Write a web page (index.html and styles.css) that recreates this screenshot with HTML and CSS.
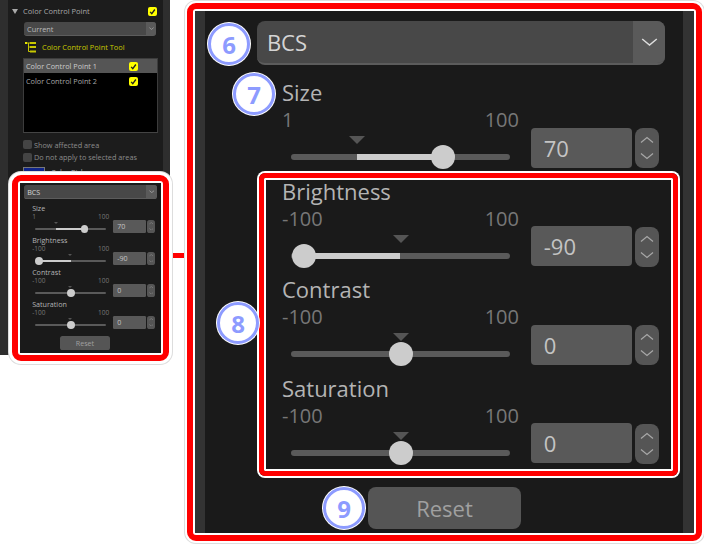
FILE: index.html
```html
<!DOCTYPE html>
<html lang="en">
<head>
  <meta charset="UTF-8" />
  <title>Color Control Point</title>
  <link rel="stylesheet" href="styles.css">
</head>
<body>
  <svg class="defs" aria-hidden="true">
    <symbol id="tick" viewBox="0 0 10 10"><path d="M2.4 5.4 L4.2 7.4 L7.6 2.8" fill="none" stroke="#222" stroke-width="1.5"/></symbol>
    <symbol id="up" viewBox="0 0 14 8"><path d="M1 6.5 L7 1.5 L13 6.5" fill="none" stroke="currentColor" stroke-width="1.2"/></symbol>
    <symbol id="down" viewBox="0 0 14 8"><path d="M1 1.5 L7 6.5 L13 1.5" fill="none" stroke="currentColor" stroke-width="1.2"/></symbol>
  </svg>

  <div class="figure">
    <!-- Kleines Panel links -->
    <div class="side-panel">
      <div class="side-content">
        <div class="side-head">
          <span class="caret"></span>
          <span class="side-title">Color Control Point</span>
          <svg class="yes-box"><use href="#tick"/></svg>
        </div>
        <div class="select small-select">
          <span class="select-text">Current</span>
          <span class="select-arrow"><svg><use href="#down"/></svg></span>
        </div>
        <div class="tool-row">
          <svg class="tool-icon" viewBox="0 0 11 11">
            <rect x="0" y="0" width="2" height="2" fill="#e6e600"/>
            <path d="M2 1 H5 M3.500 1 V9.500 H5 M3.500 5 H5" fill="none" stroke="#c8c800" stroke-width="1"/>
            <rect x="5" y="0" width="6" height="2" fill="#c8c800"/>
            <rect x="5" y="4" width="6" height="2" fill="#c8c800"/>
            <rect x="5" y="8.500" width="6" height="2" fill="#c8c800"/>
          </svg>
          <span>Color Control Point Tool</span>
        </div>
        <div class="point-list">
          <div class="point-row active"><span>Color Control Point 1</span><svg class="yes-box"><use href="#tick"/></svg></div>
          <div class="point-row"><span>Color Control Point 2</span><svg class="yes-box"><use href="#tick"/></svg></div>
        </div>
        <label class="option first"><span class="off-box"></span>Show affected area</label>
        <label class="option"><span class="off-box"></span>Do not apply to selected areas</label>
        <div class="picker"><span class="swatch"></span>Color Picker</div>
      </div>

      <div class="callout side-callout">
        <div class="callout-inner">
          <div class="bcs bcs-small">
            <div class="select">
              <span class="select-text">BCS</span>
              <span class="select-arrow"><svg><use href="#down"/></svg></span>
            </div>
            <div class="rows">
              <div class="row">
                <div class="row-left">
                  <div class="row-label">Size</div>
                  <div class="scale"><span>1</span><span>100</span></div>
                  <div class="track"><span class="fill" style="left:30%;width:39.5%"></span><span class="marker" style="left:30%"></span><span class="thumb" style="left:69.500%"></span></div>
                </div>
                <div class="value">70</div>
                <div class="spin"><svg><use href="#up"/></svg><svg><use href="#down"/></svg></div>
              </div>
              <div class="row">
                <div class="row-left">
                  <div class="row-label">Brightness</div>
                  <div class="scale"><span>-100</span><span>100</span></div>
                  <div class="track"><span class="fill" style="left:6%;width:44%"></span><span class="marker" style="left:50%"></span><span class="thumb" style="left:6%"></span></div>
                </div>
                <div class="value">-90</div>
                <div class="spin"><svg><use href="#up"/></svg><svg><use href="#down"/></svg></div>
              </div>
              <div class="row">
                <div class="row-left">
                  <div class="row-label">Contrast</div>
                  <div class="scale"><span>-100</span><span>100</span></div>
                  <div class="track"><span class="marker" style="left:50%"></span><span class="thumb" style="left:50%"></span></div>
                </div>
                <div class="value">0</div>
                <div class="spin"><svg><use href="#up"/></svg><svg><use href="#down"/></svg></div>
              </div>
              <div class="row">
                <div class="row-left">
                  <div class="row-label">Saturation</div>
                  <div class="scale"><span>-100</span><span>100</span></div>
                  <div class="track"><span class="marker" style="left:50%"></span><span class="thumb" style="left:50%"></span></div>
                </div>
                <div class="value">0</div>
                <div class="spin"><svg><use href="#up"/></svg><svg><use href="#down"/></svg></div>
              </div>
            </div>
            <div class="reset">Reset</div>
          </div>
        </div>
      </div>
    </div>

    <div class="connector"></div>

    <!-- Vergroesserter Ausschnitt -->
    <div class="callout main-callout">
      <div class="callout-inner main-inner">
        <div class="bcs bcs-large">
          <div class="select">
            <span class="select-text">BCS</span>
            <span class="select-arrow"><svg><use href="#down"/></svg></span>
          </div>
          <div class="rows">
            <div class="row">
              <div class="row-left">
                <div class="row-label">Size</div>
                <div class="scale"><span>1</span><span>100</span></div>
                <div class="track"><span class="fill" style="left:30%;width:39.5%"></span><span class="marker" style="left:30%"></span><span class="thumb" style="left:69.500%"></span></div>
              </div>
              <div class="value">70</div>
              <div class="spin"><svg><use href="#up"/></svg><svg><use href="#down"/></svg></div>
            </div>
            <div class="row-group">
              <div class="row">
                <div class="row-left">
                  <div class="row-label">Brightness</div>
                  <div class="scale"><span>-100</span><span>100</span></div>
                  <div class="track"><span class="fill" style="left:6%;width:44%"></span><span class="marker" style="left:50%"></span><span class="thumb" style="left:6%"></span></div>
                </div>
                <div class="value">-90</div>
                <div class="spin"><svg><use href="#up"/></svg><svg><use href="#down"/></svg></div>
              </div>
              <div class="row">
                <div class="row-left">
                  <div class="row-label">Contrast</div>
                  <div class="scale"><span>-100</span><span>100</span></div>
                  <div class="track"><span class="marker" style="left:50%"></span><span class="thumb" style="left:50%"></span></div>
                </div>
                <div class="value">0</div>
                <div class="spin"><svg><use href="#up"/></svg><svg><use href="#down"/></svg></div>
              </div>
              <div class="row">
                <div class="row-left">
                  <div class="row-label">Saturation</div>
                  <div class="scale"><span>-100</span><span>100</span></div>
                  <div class="track"><span class="marker" style="left:50%"></span><span class="thumb" style="left:50%"></span></div>
                </div>
                <div class="value">0</div>
                <div class="spin"><svg><use href="#up"/></svg><svg><use href="#down"/></svg></div>
              </div>
            </div>
          </div>
          <div class="reset">Reset</div>
        </div>
      </div>
    </div>

    <span class="badge badge-6">6</span>
    <span class="badge badge-7">7</span>
    <span class="badge badge-8">8</span>
    <span class="badge badge-9">9</span>
  </div>
</body>
</html>
```

FILE: styles.css
```css
body {
  margin: 0;
  background-color: #fff;
  font-family: 'Open Sans', 'Noto Sans', sans-serif;
  overflow: hidden;
}

.defs {
  position: absolute;
  width: 0;
  height: 0;
}

.figure {
  position: relative;
  display: flex;
  align-items: flex-start;
  width: 704px;
  height: 545px;
}

/* Panel links */
.side-panel {
  position: relative;
  flex: none;
  width: 170px;
  height: 355px;
  box-sizing: border-box;
  padding: 0 7px 0 8px;
  background-color: #2e2e2e;
}

.side-content {
  height: 100%;
  box-sizing: border-box;
  padding: 6px 0 0 15px;
  background-color: #1c1c1c;
  color: #a8a8a8;
  font-size: 7.3px;
}

.side-head {
  display: flex;
  align-items: center;
  width: 145px;
  height: 10px;
  margin-left: -11px;
}

.caret {
  width: 0;
  height: 0;
  margin-right: 5px;
  border-left: 3px solid transparent;
  border-right: 3px solid transparent;
  border-top: 5px solid #aaa;
}

.side-title {
  flex: 1;
  font-size: 7.500px;
}

.yes-box {
  flex: none;
  width: 9px;
  height: 9px;
  border-radius: 2px;
  background-color: #ff0;
}

.side-content .small-select {
  margin: 6px 0 0 1px;
  width: 132px;
  height: 14px;
  font-size: 6.7px;
  color: #bbb;
  border-radius: 3px;
  border-bottom-width: 1px;
}

.small-select .select-text {
  padding-left: 3px;
}

.small-select .select-arrow {
  width: 10px;
}

.small-select .select-arrow svg {
  width: 5px;
  height: 3px;
}

.tool-row {
  display: flex;
  align-items: center;
  gap: 6px;
  height: 10px;
  margin: 6px 0 0 2px;
  color: #c8c800;
  font-size: 7.4px;
}

.tool-icon {
  width: 11px;
  height: 11px;
}

.point-list {
  width: 135px;
  height: 75px;
  box-sizing: border-box;
  margin-top: 6px;
  background-color: #000;
  border: 1px solid #3c3c3c;
  border-bottom: 1px solid #444;
}

.point-row {
  display: flex;
  align-items: center;
  justify-content: space-between;
  height: 14px;
  margin-bottom: 1px;
  padding: 0 19px 0 2px;
}

.point-row.active {
  background-color: #555;
  color: #ccc;
}

.option {
  display: flex;
  align-items: center;
  gap: 2px;
  height: 9px;
  margin-top: 3.500px;
  color: #8c8c8c;
}

.option.first {
  margin-top: 7px;
}

.off-box {
  width: 9px;
  height: 9px;
  border-radius: 2px;
  background-color: #444;
}

.picker {
  display: flex;
  align-items: flex-start;
  gap: 6px;
  margin-top: 5px;
}

.swatch {
  width: 20px;
  height: 12px;
  background-color: #10258a;
  border: 1px solid #777;
  box-sizing: content-box;
}

/* Rote Rahmen */
.callout {
  box-sizing: border-box;
  border: 6px solid #f00;
  border-radius: 9px;
  padding: 2px;
  background-color: #fff;
}

.callout-inner {
  height: 100%;
  box-sizing: border-box;
  background-color: #1a1a1a;
}

.side-callout {
  position: absolute;
  left: 12px;
  top: 175px;
  width: 157px;
  height: 186px;
  box-shadow: 0 0 0 3px #fff, 0 0 0 4px #ddd;
}

.side-callout .callout-inner {
  padding: 2px 0 0 4px;
}

.connector {
  flex: none;
  width: 12px;
  height: 5px;
  margin: 253px 3px 0 2px;
  background-color: #f00;
}

.main-callout {
  flex: none;
  width: 515px;
  height: 538px;
  margin-top: 3px;
  box-shadow: 0 0 0 2px #fff, 0 0 0 3px #ddd;
}

.main-inner {
  padding: 0 11px 0 10px;
  background-color: #333;
}

/* BCS Block, alles in em damit es in beiden Groessen passt */
.bcs {
  width: 20.4em;
}

.bcs-small {
  font-size: 6.5px;
}

.bcs-large {
  font-size: 20px;
  width: 478px;
  height: 522px;
  box-sizing: border-box;
  padding: 10px 0 0 52px;
  background-color: #1a1a1a;
}

.bcs-large .select {
  width: 20.4em;
}

.select {
  display: flex;
  align-items: stretch;
  height: 2.2em;
  box-sizing: border-box;
  overflow: hidden;
  border-radius: .4em;
  border-bottom: .1em solid #5c5c5c;
  background-color: #484848;
  color: #d4d4d4;
}

.select-text {
  flex: 1;
  display: flex;
  align-items: center;
  padding-left: .45em;
  font-size: 1.1em;
}

.select-arrow {
  display: flex;
  align-items: center;
  justify-content: center;
  width: 1.6em;
  background-color: #5a5a5a;
  color: #ddd;
}

.select-arrow svg {
  width: .85em;
  height: .5em;
}

.rows {
  margin-top: .7em;
}

.row-group {
  position: relative;
}

/* Rahmen um Brightness, Contrast und Saturation */
.row-group::after {
  content: "";
  position: absolute;
  left: 2px;
  top: -5px;
  width: 419px;
  height: 303px;
  box-sizing: border-box;
  border: 5px solid #f00;
  border-radius: 6px;
  box-shadow: 0 0 0 2px #fff, inset 0 0 0 2px #fff;
}

.row {
  display: flex;
  align-items: flex-start;
  height: 4.925em;
  padding-left: 1.25em;
}

.row-left {
  width: 11.85em;
  margin-right: .6em;
}

.row-label {
  height: 1.273em;
  line-height: 1.24em;
  font-size: 1.1em;
  color: #b4b4b4;
}

.scale {
  display: flex;
  justify-content: space-between;
  height: 1.3em;
  line-height: 1.25em;
  color: #777;
}

.track {
  position: relative;
  height: .3em;
  margin: 1.05em .45em 0;
  border-radius: .15em;
  background-color: #5a5a5a;
}

.fill {
  position: absolute;
  top: 0;
  height: 100%;
  background-color: #ccc;
}

.marker {
  position: absolute;
  top: -.9em;
  width: 0;
  height: 0;
  margin-left: -.4em;
  border-left: .4em solid transparent;
  border-right: .4em solid transparent;
  border-top: .4em solid #555;
}

.thumb {
  position: absolute;
  top: -.45em;
  width: 1.2em;
  height: 1.2em;
  margin-left: -.6em;
  border-radius: 50%;
  background-color: #ccc;
}

.value {
  width: 4.6em;
  height: 1.818em;
  line-height: 1.818em;
  margin-top: 2.227em;
  padding-left: .58em;
  box-sizing: border-box;
  border-radius: .18em;
  background-color: #595959;
  color: #c4c4c4;
  font-size: 1.1em;
}

.spin {
  display: flex;
  flex-direction: column;
  align-items: center;
  justify-content: center;
  gap: .4em;
  width: 1.2em;
  height: 2em;
  margin: 2.45em 0 0 .15em;
  border-radius: .4em;
  background-color: #555;
  color: #a8a8a8;
}

.spin svg {
  width: .7em;
  height: .4em;
}

.reset {
  display: flex;
  align-items: center;
  justify-content: center;
  width: 6.955em;
  height: 1.909em;
  margin: .636em 0 0 5.045em;
  border-radius: .36em;
  background-color: #555;
  color: #a0a0a0;
  font-size: 1.1em;
}

/* Nummern */
.badge {
  position: absolute;
  width: 42px;
  height: 42px;
  box-sizing: border-box;
  display: flex;
  align-items: center;
  justify-content: center;
  border: 3px solid #8d9bff;
  border-radius: 50%;
  background-color: #fff;
  box-shadow: 0 0 0 1px #fff;
  color: #8d9bff;
  font-size: 24px;
  font-weight: 700;
}

.badge-6 { left: 208px; top: 23px; }
.badge-7 { left: 233px; top: 73px; }
.badge-8 { left: 217px; top: 302px; }
.badge-9 { left: 323px; top: 487px; }
```
